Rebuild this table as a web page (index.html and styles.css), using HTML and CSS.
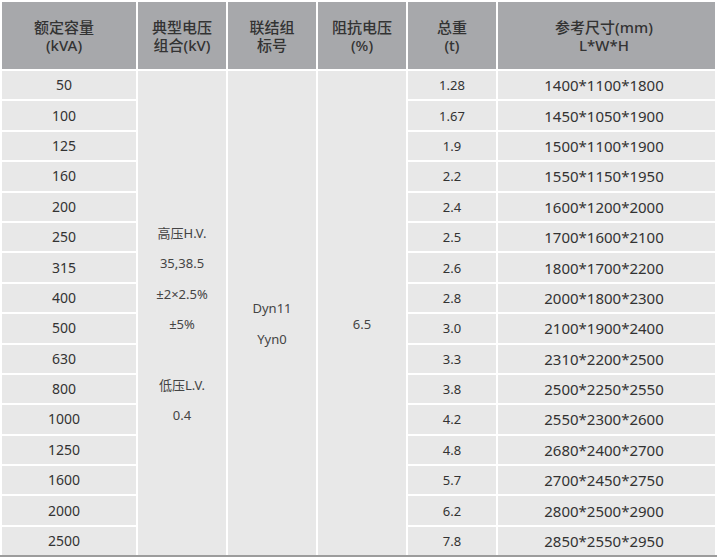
FILE: index.html
```html
<!DOCTYPE html>
<html lang="zh">
<head>
<meta charset="utf-8">
<title>变压器参数</title>
<link rel="stylesheet" href="styles.css">
</head>
<body>
<div class="wrap">
<table class="spec">
  <colgroup>
    <col class="c1"><col class="c2"><col class="c3"><col class="c4"><col class="c5"><col class="c6">
  </colgroup>
  <thead>
    <tr>
      <th class="first">额定容量<br>(kVA)</th>
      <th>典型电压<br>组合(kV)</th>
      <th>联结组<br>标号</th>
      <th>阻抗电压<br>(%)</th>
      <th>总重<br>(t)</th>
      <th class="last">参考尺寸(mm)<br>L*W*H</th>
    </tr>
  </thead>
  <tbody>
    <tr>
      <td class="first">50</td>
      <td rowspan="16" class="span volt">
        <div class="ln">高压H.V.</div>
        <div class="ln">35,38.5</div>
        <div class="ln">±2×2.5%</div>
        <div class="ln">±5%</div>
        <div class="ln"></div>
        <div class="ln">低压L.V.</div>
        <div class="ln">0.4</div>
      </td>
      <td rowspan="16" class="span grp">
        <div class="ln">Dyn11</div>
        <div class="ln">Yyn0</div>
      </td>
      <td rowspan="16" class="span imp">6.5</td>
      <td class="wt">1.28</td>
      <td class="last">1400*1100*1800</td>
    </tr>
    <tr><td class="first">100</td><td class="wt">1.67</td><td class="last">1450*1050*1900</td></tr>
    <tr><td class="first">125</td><td class="wt">1.9</td><td class="last">1500*1100*1900</td></tr>
    <tr><td class="first">160</td><td class="wt">2.2</td><td class="last">1550*1150*1950</td></tr>
    <tr><td class="first">200</td><td class="wt">2.4</td><td class="last">1600*1200*2000</td></tr>
    <tr><td class="first">250</td><td class="wt">2.5</td><td class="last">1700*1600*2100</td></tr>
    <tr><td class="first">315</td><td class="wt">2.6</td><td class="last">1800*1700*2200</td></tr>
    <tr><td class="first">400</td><td class="wt">2.8</td><td class="last">2000*1800*2300</td></tr>
    <tr><td class="first">500</td><td class="wt">3.0</td><td class="last">2100*1900*2400</td></tr>
    <tr><td class="first">630</td><td class="wt">3.3</td><td class="last">2310*2200*2500</td></tr>
    <tr><td class="first">800</td><td class="wt">3.8</td><td class="last">2500*2250*2550</td></tr>
    <tr><td class="first">1000</td><td class="wt">4.2</td><td class="last">2550*2300*2600</td></tr>
    <tr><td class="first">1250</td><td class="wt">4.8</td><td class="last">2680*2400*2700</td></tr>
    <tr><td class="first">1600</td><td class="wt">5.7</td><td class="last">2700*2450*2750</td></tr>
    <tr><td class="first">2000</td><td class="wt">6.2</td><td class="last">2800*2500*2900</td></tr>
    <tr><td class="first">2500</td><td class="wt">7.8</td><td class="last">2850*2550*2950</td></tr>
  </tbody>
</table>
</div>
</body>
</html>
```

FILE: styles.css
```css
html, body {
  margin: 0;
  padding: 0;
  background: #ffffff;
}

body {
  font-family: "Noto Sans", "Noto Sans CJK SC", sans-serif;
  color: #333333;
}

.wrap {
  width: 717px;
  border-bottom: 2px solid #9c9c9c;
}

.spec {
  width: 717px;
  border-collapse: separate;
  border-spacing: 2px;
  table-layout: fixed;
  margin-bottom: -2px;
}

.c1 { width: 134px; }
.c2 { width: 88px; }
.c3 { width: 88px; }
.c4 { width: 88px; }
.c5 { width: 88px; }
.c6 { width: 217px; }

.spec th {
  height: 67px;
  padding: 0;
  background: #a7a8ab;
  color: #333333;
  font-size: 15px;
  font-weight: 500;
  line-height: 18px;
  text-align: center;
  vertical-align: middle;
}

.spec td {
  height: 28.4px;
  padding: 0;
  background: #e8e8e8;
  font-size: 14px;
  line-height: 18px;
  text-align: center;
  vertical-align: middle;
  color: #333333;
}

.spec .first {
  padding-right: 10px;
}

.spec .last {
  padding-right: 5px;
}

.spec td.last {
  font-size: 15px;
}

.spec td.wt {
  font-size: 13px;
}

.spec td.span {
  padding-top: 22px;
  font-size: 13px;
  color: #444444;
}

.volt .ln {
  height: 30.4px;
  line-height: 30.4px;
}

.grp .ln {
  height: 31px;
  line-height: 31px;
}
```
